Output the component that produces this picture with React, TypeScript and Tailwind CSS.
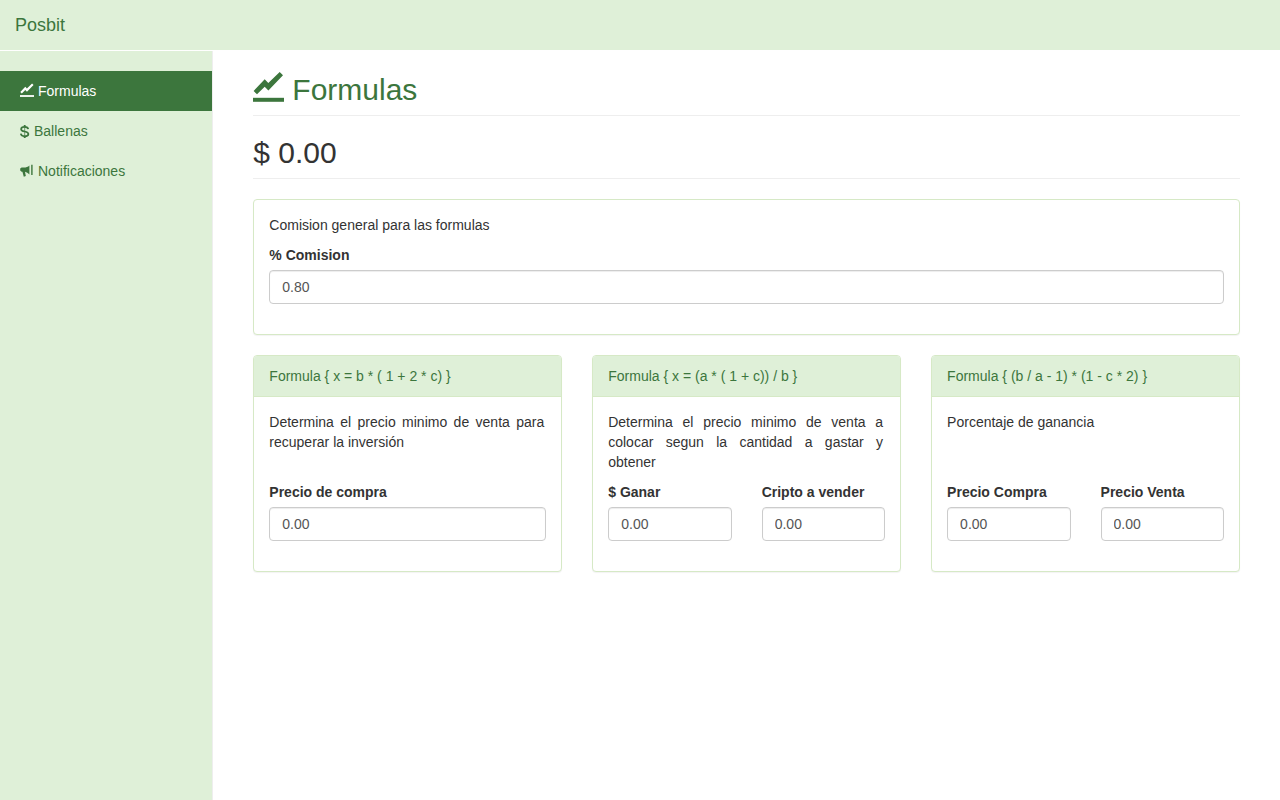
import React from "react";

type IconProps = { className?: string };

function ChartIcon({ className }: IconProps) {
  return (
    <svg viewBox="0 0 31 31" fill="currentColor" aria-hidden="true" className={className}>
      <path d="M0.6 20 L11.7 8.3 L15.3 12 L26.7 1 L30 4.3 L15.4 19.4 L11.7 15.7 L4 23.2 Z" />
      <path d="M0 26.8 H31 V30.8 H0 Z" />
    </svg>
  );
}

function DollarIcon({ className }: IconProps) {
  return (
    <svg
      viewBox="0 0 10 14"
      fill="none"
      stroke="currentColor"
      strokeWidth="1.7"
      aria-hidden="true"
      className={className}
    >
      <path d="M8.2 5.2 C8 3.6 6.7 2.9 4.7 2.9 C2.5 2.9 1.1 3.7 1.1 5.2 C1.1 6.7 2.4 7.1 4.7 7.5 C7.1 7.9 8.4 8.6 8.4 10 C8.4 11.5 6.9 12.3 4.7 12.3 C2.5 12.3 1 11.5 0.8 9.7" />
      <path d="M4.7 1 V3.2 M4.7 11.8 V14" strokeWidth="1.8" />
      <path d="M4.7 3 V12" strokeWidth="0.7" />
    </svg>
  );
}

function BullhornIcon({ className }: IconProps) {
  return (
    <svg viewBox="0 0 14 14" fill="currentColor" aria-hidden="true" className={className}>
      <path d="M11.2 0.8 H12.6 V11 H11.2 Z" />
      <path d="M9.4 1.4 V10.4 C8 9 6.6 8.2 5 7.8 L5.8 12 L3.8 12.7 L2.4 7.8 H1.6 L0.2 6.6 V4.6 L1.6 3.6 H4 C6 3.6 8 2.8 9.4 1.4 Z" />
    </svg>
  );
}

const links = [
  { label: "Formulas", Icon: ChartIcon, size: "-mt-0.5 size-[14px]", active: true },
  { label: "Ballenas", Icon: DollarIcon, size: "h-[14px] w-[10px]", active: false },
  { label: "Notificaciones", Icon: BullhornIcon, size: "size-[14px]", active: false },
];

function Field({ id, label, value }: { id: string; label: string; value: string }) {
  return (
    <div className="mb-[15px] min-w-0 flex-1">
      <label htmlFor={id} className="mb-[5px] block font-bold">
        {label}
      </label>
      <input
        id={id}
        type="text"
        defaultValue={value}
        className="block h-[34px] w-full rounded-[4px] border border-[#cccccc] bg-white px-3 py-[6px] text-[#555555] shadow-[inset_0_1px_1px_rgba(0,0,0,0.075)] outline-none focus:border-[#66afe9]"
      />
    </div>
  );
}

function Panel({ title, children }: { title?: string; children: React.ReactNode }) {
  return (
    <section className="rounded-[4px] border border-[#d6e9c6] bg-white shadow-[0_1px_1px_rgba(0,0,0,0.05)]">
      {title && (
        <h3 className="rounded-t-[3px] border-b border-[#d6e9c6] bg-[#dff0d8] px-[15px] py-[10px] text-[#3c763d]">
          {title}
        </h3>
      )}
      <div className="p-[15px]">{children}</div>
    </section>
  );
}

const formulas = [
  {
    title: "Formula { x = b * ( 1 + 2 * c) }",
    text: "Determina el precio minimo de venta para recuperar la inversión",
    fields: [{ id: "compra", label: "Precio de compra" }],
  },
  {
    title: "Formula { x = (a * ( 1 + c)) / b }",
    text: "Determina el precio minimo de venta a colocar segun la cantidad a gastar y obtener",
    fields: [
      { id: "ganar", label: "$ Ganar" },
      { id: "cripto", label: "Cripto a vender" },
    ],
  },
  {
    title: "Formula { (b / a - 1) * (1 - c * 2) }",
    text: "Porcentaje de ganancia",
    fields: [
      { id: "precio-compra", label: "Precio Compra" },
      { id: "precio-venta", label: "Precio Venta" },
    ],
  },
];

export default function App() {
  return (
    <div className="flex min-h-screen flex-col bg-white font-['Liberation_Sans',Arial,sans-serif] text-[14px] leading-5 text-[#333333]">
      <header className="mb-px flex h-[50px] items-center bg-[#dff0d8] px-[15px]">
        <a href="#" className="text-[18px] text-[#3c763d]">
          Posbit
        </a>
      </header>
      <div className="flex flex-1">
        <nav className="w-1/6 shrink-0 border-r border-[#eeeeee] bg-[#dff0d8] pt-5">
          <ul>
            {links.map(({ label, Icon, size, active }) => (
              <li key={label}>
                <a
                  href="#"
                  className={
                    active
                      ? "flex items-center gap-1 bg-[#3c763d] px-5 py-[10px] text-white"
                      : "flex items-center gap-1 px-5 py-[10px] text-[#3c763d]"
                  }
                >
                  <Icon className={`${size} shrink-0`} />
                  {label}
                </a>
              </li>
            ))}
          </ul>
        </nav>
        <main className="min-w-0 flex-1 px-10 pt-5">
          <h1 className="mb-5 flex h-[45px] border-b border-[#eeeeee] text-[30px] leading-[38px] font-medium text-[#3c763d]">
            <ChartIcon className="mr-2 size-[31px] shrink-0" />
            Formulas
          </h1>
          <h2 className="mb-5 border-b border-[#eeeeee] pb-[9px] text-[30px] leading-[33px] font-medium">
            $ 0.00
          </h2>
          <Panel>
            <p className="mb-[10px]">Comision general para las formulas</p>
            <Field id="comision" label="% Comision" value="0.80" />
          </Panel>
          <div className="mt-5 grid grid-cols-3 gap-[30px]">
            {formulas.map(({ title, text, fields }) => (
              <Panel key={title} title={title}>
                <p className="mb-[10px] min-h-[60px] pr-0.5 text-justify">{text}</p>
                <div className="flex gap-[30px]">
                  {fields.map(({ id, label }) => (
                    <Field key={id} id={id} label={label} value="0.00" />
                  ))}
                </div>
              </Panel>
            ))}
          </div>
        </main>
      </div>
    </div>
  );
}
